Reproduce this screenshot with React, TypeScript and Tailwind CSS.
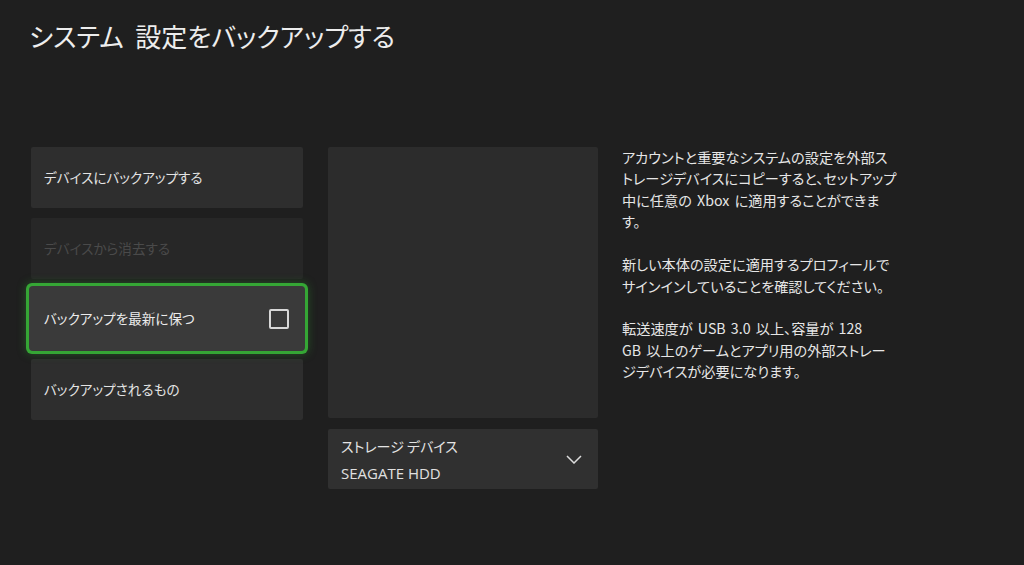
const JP = "font-['Noto_Sans_CJK_JP','Noto_Sans',sans-serif] [font-feature-settings:'palt']";

function MenuButton({
  label,
  disabled,
  focused,
  checkbox,
}: {
  label: string;
  disabled?: boolean;
  focused?: boolean;
  checkbox?: boolean;
}) {
  let cls = "bg-[#2e2e2e] text-[#e4e4e4]";
  if (disabled) cls = "bg-[#272727] text-[#4a4a4a]";
  if (focused)
    cls =
      "bg-[#3a3a3a] text-[#ececec] shadow-[0_0_0_2px_#3a3a3a,0_0_0_5px_#35a635,0_0_10px_5px_rgba(50,170,50,0.35)] z-10";
  return (
    <div className={`relative flex h-[61px] items-center justify-between rounded-[2px] pl-[13px] pr-[14px] text-[13.6px] ${cls}`}>
      <span>{label}</span>
      {checkbox && <span className="h-[20px] w-[20px] rounded-[2px] border-2 border-[#d8d8d8]" />}
    </div>
  );
}

export default function App() {
  return (
    <div className={`h-[565px] w-[1024px] overflow-hidden bg-[#1f1f1f] ${JP}`}>
      <h1 className="pl-[29px] pt-[16px] text-[26px] leading-[40px] text-[#ededed]">
        システム&nbsp;&nbsp;設定をバックアップする
      </h1>

      <div className="mt-[91px] flex pl-[31px]">
        <div className="flex w-[272px] flex-col gap-[9.5px]">
          <MenuButton label="デバイスにバックアップする" />
          <MenuButton label="デバイスから消去する" disabled />
          <MenuButton label="バックアップを最新に保つ" focused checkbox />
          <MenuButton label="バックアップされるもの" />
        </div>

        <div className="ml-[25px] flex w-[270px] flex-col gap-[11px]">
          <div className="h-[271px] rounded-[2px] bg-[#2c2c2c]" />
          <div className="flex h-[60px] items-center justify-between rounded-[2px] bg-[#303030] pl-[13px] pr-[16px] text-[#e4e4e4]">
            <div className="flex flex-col pt-[1px] text-[14px] leading-[27px]">
              <span>ストレージ デバイス</span>
              <span className="font-['Open_Sans',sans-serif] text-[15px] text-[#e0e0e0]">SEAGATE HDD</span>
            </div>
            <svg width="16" height="9" viewBox="0 0 16 9" className="mt-[1px]" fill="none">
              <polyline points="1,1 8,8 15,1" stroke="#dcdcdc" strokeWidth="1.5" />
            </svg>
          </div>
        </div>

        <div className="ml-[24px] w-[280px] text-[14.2px] leading-[21.4px] text-[#e6e6e6] [word-spacing:2px]">
          <p>
            アカウントと重要なシステムの設定を外部ス
            <br />
            トレージデバイスにコピーすると、セットアップ
            <br />
            中に任意の Xbox に適用することができま
            <br />
            す。
          </p>
          <p className="mt-[21.5px]">
            新しい本体の設定に適用するプロフィールで
            <br />
            サインインしていることを確認してください。
          </p>
          <p className="mt-[21.5px]">
            転送速度が USB 3.0 以上、容量が 128
            <br />
            GB 以上のゲームとアプリ用の外部ストレー
            <br />
            ジデバイスが必要になります。
          </p>
        </div>
      </div>
    </div>
  );
}
